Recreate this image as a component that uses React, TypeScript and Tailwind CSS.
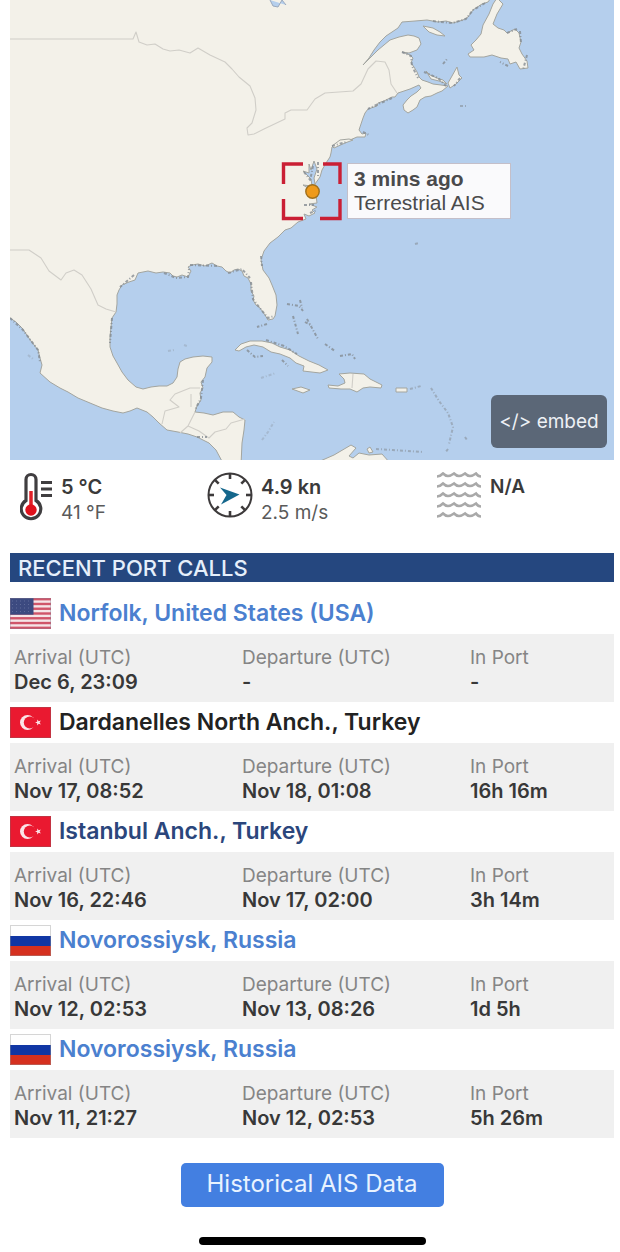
import { clsx } from 'clsx'

type Country = 'us' | 'tr' | 'ru'

interface PortCall {
  country: Country
  name: string
  tone: 'link' | 'dark' | 'visited'
  arrival: string
  departure: string
  inPort: string
}

const portCalls: PortCall[] = [
  { country: 'us', name: 'Norfolk, United States (USA)', tone: 'link', arrival: 'Dec 6, 23:09', departure: '-', inPort: '-' },
  { country: 'tr', name: 'Dardanelles North Anch., Turkey', tone: 'dark', arrival: 'Nov 17, 08:52', departure: 'Nov 18, 01:08', inPort: '16h 16m' },
  { country: 'tr', name: 'Istanbul Anch., Turkey', tone: 'visited', arrival: 'Nov 16, 22:46', departure: 'Nov 17, 02:00', inPort: '3h 14m' },
  { country: 'ru', name: 'Novorossiysk, Russia', tone: 'link', arrival: 'Nov 12, 02:53', departure: 'Nov 13, 08:26', inPort: '1d 5h' },
  { country: 'ru', name: 'Novorossiysk, Russia', tone: 'link', arrival: 'Nov 11, 21:27', departure: 'Nov 12, 02:53', inPort: '5h 26m' },
]

function Flag({ country }: { country: Country }) {
  if (country === 'us') {
    return (
      <svg viewBox="0 0 41 31" className="h-[31px] w-[41px] shrink-0" aria-hidden="true">
        <rect width="41" height="31" fill="#f5e6e8" />
        {[0, 1, 2, 3, 4, 5, 6].map((i) => (
          <rect key={i} y={i * 4.77} width="41" height="2.4" fill="#d0566a" />
        ))}
        <rect width="23.5" height="16.7" fill="#3c4a80" />
        {[3, 6.5, 10, 13.5].map((y) => (
          <path key={y} d={`M2 ${y}H22`} stroke="#5f6b99" strokeWidth="1" strokeDasharray="1 3" />
        ))}
        <rect x="0.5" y="0.5" width="40" height="30" fill="none" stroke="#8a7f96" strokeOpacity="0.35" />
      </svg>
    )
  }
  if (country === 'tr') {
    return (
      <svg viewBox="0 0 41 31" className="h-[31px] w-[41px] shrink-0" aria-hidden="true">
        <rect width="41" height="31" fill="#ea1930" />
        <circle cx="17.5" cy="15.5" r="7.5" fill="#fbe4e8" />
        <circle cx="19.8" cy="15.5" r="6" fill="#ea1930" />
        <path d="M25 15.5l2.2-.8v-2.2l1.5 1.800 2.200-.7-1.300 1.900 1.300 1.900-2.200-.7-1.500 1.800v-2.200z" fill="#fbe4e8" />
        <rect x="0.5" y="0.5" width="40" height="30" fill="none" stroke="#a8454f" strokeOpacity="0.6" />
      </svg>
    )
  }
  return (
    <svg viewBox="0 0 41 31" className="h-[31px] w-[41px] shrink-0" aria-hidden="true">
      <rect width="41" height="31" fill="#fefefe" />
      <rect y="11" width="41" height="10" fill="#1036a4" />
      <rect y="21" width="41" height="10" fill="#d5301f" />
      <rect x="0.5" y="0.5" width="40" height="30" fill="none" stroke="#999" strokeOpacity="0.4" />
    </svg>
  )
}

function MapDrawing() {
  return (
    <svg
      viewBox="10 0 604 460"
      preserveAspectRatio="xMidYMid slice"
      className="block h-[460px] w-full"
      role="img"
      aria-label="Last known position of the vessel"
    >
      <rect x="10" width="604" height="460" fill="#b5cfed" />
      <g fill="#f3f1e9" stroke="#a3a59f" strokeWidth="1" strokeLinejoin="round">
        <path d="M0 -5H493L488 2 482 4 473 10 468 17 463 20 453 23 446 21 438 22 427 20 415 21 402 22 398 28 392 32 386 36 380 42 374 50 369 58 363 65 372 56 378 50 384 45 390 40 399 37 408 35 414 36 419 38 421 44 417 50 409 53 402 52 410 55 413 58 411 63 414 67 417 72 419 77 422 80 428 82 433 84 441 85 448 86 442 91 437 93 431 96 425 97 420 100 417 107 413 110 408 113 404 110 403 105 407 100 411 96 417 92 421 88 419 85 410 89 398 93 395 97 392 97 384 101 378 103 377 106 368 109 365 113 363 118 361 124 359 130 362 134 366 133 365 137 357 137 350 140 342 142 336 145 332 147 331 153 330 157 326 163 322 170 320 177 315 184 314 178 317 169 314 161 311 170 309 164 309 173 303 171 311 179 312 186 303 185 311 190 316 195 317 203 309 204 317 207 312 210 315 213 309 216 304 214 306 219 298 222 291 228 285 230 278 237 270 243 264 251 261 260 263 270 269 278 272 285 276 295 277 305 275 316 273 319 268 320 265 315 260 308 256 305 253 300 254 296 251 291 251 284 248 278 244 276 242 271 238 269 234 270 230 273 226 271 222 267 217 266 212 263 205 266 198 264 192 265 188 267 191 271 188 277 182 275 177 277 173 276 170 273 163 272 156 273 148 271 138 273 135 280 129 282 122 285 119 290 117 295 117 304 116 312 112 318 111 327 110 337 110 347 113 356 117 363 122 372 128 380 136 387 143 389 151 387 159 386 167 386 173 383 177 377 178 369 180 362 185 359 193 357 203 356 212 357 212 362 207 368 205 377 201 382 203 388 200 393 201 400 197 406 195 412 204 413 213 415 223 412 233 412 239 417 245 420 244 430 242 443 241 465H224L216 450 209 443 203 440 197 437 188 434 178 432 167 430 159 423 153 417 147 412 142 410 137 408 130 411 123 413 113 411 102 408 90 403 78 398 68 392 60 388 50 382 40 373 42 365 40 358 38 350 31 341 22 328 16 322 10 318 0 310z" />
        <path d="M497 -2L503 4 497 14 493 24 498 28 504 30 507 33 515 29 519 33 521 42 519 48 522 54 527 61 528 68 520 69 516 62 510 64 508 59 501 58 492 55 484 57 470 57 468 54 474 50 471 45 476 40 481 34 483 25 489 14 493 4z" />
        <path d="M423 26L433 28 440 32 445 36 437 35 429 32z" />
        <path d="M457 67L459 75 462 78 456 84 450 88 448 83 452 76z" />
        <path d="M426 71l4 4 7 3 6 2 4 4-8-3-8-2z" />
        <path d="M332 146l8-6 9-1 4 1-8 3-11 5z" />
        <path d="M235 350L241 344 250 341 262 341 272 343 280 347 290 350 299 356 309 361 319 365 328 370 320 373 303 371 304 366 296 363 290 358 280 354 271 352 263 347 254 345 246 347 239 351z" />
        <path d="M339 374L350 373 364 374 370 379 382 385 381 388 370 387 363 388 357 392 350 389 341 389 329 388 328 385 338 386 345 383 344 379z" />
        <path d="M292 389l9-2 9 3-7 3z" />
        <path d="M396 388h11v4h-11z" />
        <path d="M318 462l16-7 17-10 5 3-7 8 4 2 6-5 10 2 13-1 8 9z" />
        <path d="M367 449l3-2 3 5-4 1z" />
      </g>
      <g fill="none" stroke="#d0cec8" strokeWidth="1.1" strokeLinejoin="round">
        <path d="M10 39H133L136 32 139 42 147 45 155 44 163 49 170 51 179 50 190 53 198 48 210 55 225 62 232 69 239 77 250 86 255 98 256 110 252 123 247 128 248 135 254 134 264 129 285 119 285 113 291 110 307 110 315 99 325 93 353 91 361 84 368 69 376 61 385 62 389 70 391 84 397 93" />
        <path d="M10 250H29L41 258 49 271 61 280 66 273 74 270 82 275 91 289 98 305 106 309 116 312" />
        <path d="M200 388H190L175 394 170 400 179 407 165 411 162 424M191 394V407M195 412L188 426 180 433M188 426L199 431 209 438 215 432 226 429 231 423 245 419M353 374L352 388" />
      </g>
      <path d="M270 0l3 6 5 1 4-7 4 5" fill="#b5cfed" stroke="#9aa9bc" />
      <g fill="none" stroke="#858c93" strokeWidth="2" strokeDasharray="3 2 1 2" opacity="0.8">
        <path d="M485 3l-12 7-7 9-14 4-20-2M520 31l1 12M507 33l10-4M527 55l-4 15M508 66l-8-4M443 64l4-5" />
        <path d="M392 98l-18 8-6 3M363 132l6 3M332 146l14-4M402 52l9 4 1 10 6 12M424 72l14 6 8 8M460 78l-6 8" />
        <path d="M251 282l2 17 6 8 9 11 6-2M164 273l12 5 12-1 1-8M190 265l28 1M228 273l14-4 8 9M134 275l-14 12M112 318l-2 25M203 380l-2 18-6 12M261 256l1 10" />
        <path d="M287 304l12 2 4 5M293 316l5 18M300 300l2 8M305 322l7 4M307 319l11 20M325 344l10 7M340 356l12-2 3 5M267 324l-10 3" />
        <path d="M266 340l18 6 13 8M282 360l6 6M247 350l8 7 8-1M10 318l13 12 15 20 2 12" />
        <path d="M410 389l11-3M431 388l8 13 9 12 5 14-4 17" opacity="0.65" />
        <path d="M376 449l17 1 30 2M448 449l-3 4M465 437l2 3M415 244l4-1M460 106l6 0" opacity="0.7" />
        <path d="M168 351l6-1M184 345l3 1M261 378l15-5M262 440l6-8 6-10M28 355l5 4" opacity="0.4" />
        <path d="M313 166l-3 15M304 172l7 9M318 162v16M304 205l10 0M310 213l7-3M197 437l10 0" />
      </g>
      <g fill="none" stroke="#ca1f34" strokeWidth="3.4">
        <path d="M303 164H283.500V184M323 164H340V184M283.500 199V218.500H303M340 199V218.500H320" />
      </g>
      <circle cx="312.500" cy="191.500" r="6.700" fill="#ee9a1b" stroke="#a0701c" strokeWidth="1.4" />
    </svg>
  )
}

function Thermometer() {
  return (
    <svg viewBox="0 0 34 50" className="h-[50px] w-[34px] shrink-0" aria-hidden="true">
      <path d="M6 7.500a5 5 0 0 1 10 0V28.500a9.800 9.800 0 1 1-10 0z" fill="#fff" stroke="#403e40" strokeWidth="3.200" />
      <path d="M11 19v20" stroke="#e02027" strokeWidth="3.500" />
      <circle cx="11" cy="38" r="5.700" fill="#e0111c" />
      <path d="M21 10.500h11M21 17h11M21 23.500h11" stroke="#403e40" strokeWidth="2.800" />
    </svg>
  )
}

function WindDial() {
  return (
    <svg viewBox="0 0 46 46" className="h-[46px] w-[46px] shrink-0" aria-hidden="true">
      <circle cx="23" cy="23" r="21.500" fill="#fff" stroke="#3d3a3b" strokeWidth="2" />
      {[0, 45, 90, 135, 180, 225, 270, 315].map((angle) => (
        <path key={angle} d="M23 2v5" stroke="#3d3a3b" strokeWidth="2.600" transform={`rotate(${angle} 23 23)`} />
      ))}
      <path d="M13 15.500l19.500 7-18.500 10 5.500-9.500z" fill="#15678c" />
    </svg>
  )
}

function Waves() {
  return (
    <svg viewBox="0 0 46 46" className="h-[46px] w-[46px] shrink-0" aria-hidden="true">
      {[3, 13, 23, 33, 43].map((y) => (
        <path
          key={y}
          d={`M1 ${y + 1.5}q3 0 6-3 2.500 2.500 5 2.500t6-2.500q2.500 2.500 5 2.500t6-2.500q2.500 2.500 5 2.500t6-2.500q2 3 5 3`}
          fill="none"
          stroke="#a9a9a9"
          strokeWidth="2.600"
        />
      ))}
    </svg>
  )
}

function PortCallCard({ call }: { call: PortCall }) {
  const details = [
    { label: 'Arrival (UTC)', value: call.arrival },
    { label: 'Departure (UTC)', value: call.departure },
    { label: 'In Port', value: call.inPort },
  ]

  return (
    <article>
      <div className="flex h-[41px] items-center gap-2">
        <Flag country={call.country} />
        <h3 className="pb-[2px] text-[23px] leading-7 font-semibold">
          <a
            href="#port"
            className={clsx(
              call.tone === 'link' && 'text-[#4b80cf]',
              call.tone === 'dark' && 'text-[#222222]',
              call.tone === 'visited' && 'text-[#2b467c]'
            )}
          >
            {call.name}
          </a>
        </h3>
      </div>
      <dl className="grid h-[68px] grid-cols-[38fr_38fr_24fr] bg-[#f0f0f0] pt-3 pl-1">
        {details.map((item) => (
          <div key={item.label}>
            <dt className="text-[19px] leading-6 text-[#858585]">{item.label}</dt>
            <dd className="text-[20px] leading-6 font-semibold text-[#383838]">{item.value}</dd>
          </div>
        ))}
      </dl>
    </article>
  )
}

export default function App() {
  return (
    <main className="bg-white pr-[6px] pb-[7px] pl-[10px] font-[Inter,'Liberation_Sans',sans-serif]">
      <section className="relative overflow-hidden">
        <MapDrawing />
        <div className="absolute top-[163px] left-[337px] w-[164px] border border-[#c4bfc9] bg-[#fafafc] px-[6px] py-[3px] font-['Liberation_Sans',Arial,sans-serif] text-[21px] leading-6 text-[#4a4a4c]">
          <p className="font-bold">3 mins ago</p>
          <p>Terrestrial AIS</p>
        </div>
        <button
          type="button"
          className="absolute right-[7px] bottom-3 h-[53px] w-[116px] rounded-md bg-[#5b6777] pt-[2px] text-[19px] text-[#eef1f5]"
        >
          &lt;/&gt; embed
        </button>
      </section>

      <section className="grid h-[93px] grid-cols-[187fr_229fr_178fr] pt-3 pl-[10px] text-[19px] leading-[26px] text-[#3a3a3a]">
        <div className="flex items-start gap-[7px]">
          <Thermometer />
          <div className="pt-[2px]">
            <p className="text-[20px] leading-[26px] font-semibold">5 °C</p>
            <p className="text-[#5a5a5a]">41 °F</p>
          </div>
        </div>
        <div className="flex items-start gap-2">
          <WindDial />
          <div className="pt-[2px]">
            <p className="text-[20px] leading-[26px] font-semibold">4.9 kn</p>
            <p className="text-[#5a5a5a]">2.5 m/s</p>
          </div>
        </div>
        <div className="flex items-start gap-2">
          <Waves />
          <div className="pt-[2px]">
            <p className="font-semibold">N/A</p>
          </div>
        </div>
      </section>

      <section>
        <h2 className="mb-[11px] bg-[#25477f] pt-px pl-2 text-[22px] leading-7 font-medium text-[#e6effb]">
          RECENT PORT CALLS
        </h2>
        {portCalls.map((call) => (
          <PortCallCard key={call.arrival} call={call} />
        ))}
      </section>

      <div className="mt-[25px] flex flex-col items-center">
        <button type="button" className="h-[44px] w-[263px] rounded-[5px] bg-[#437fe1] pb-[2px] text-[24px] text-[#e9f3ff]">
          Historical AIS Data
        </button>
        <div className="mt-[30px] h-2 w-[227px] rounded-full bg-black" />
      </div>
    </main>
  )
}
